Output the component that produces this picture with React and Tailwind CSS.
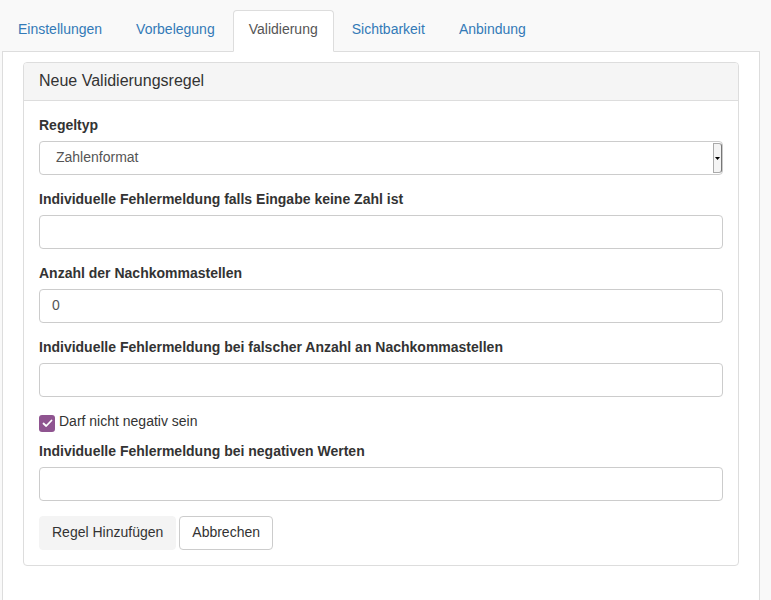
import React from "react";

const tabs = ["Einstellungen", "Vorbelegung", "Validierung", "Sichtbarkeit", "Anbindung"];

function Label({ children }) {
  return <div className="mb-[5px] pb-[2px] font-bold text-[#333] leading-[18px]">{children}</div>;
}

function Input({ value }) {
  return (
    <div className="h-[34px] border border-[#ccc] rounded-[4px] bg-white px-[12px] pb-[2px] flex items-center text-[#555]">
      {value}
    </div>
  );
}

export default function App() {
  return (
    <div className="min-h-[600px] w-[771px] bg-[#f9f9f9] pt-[10px] font-['Liberation_Sans',Arial,sans-serif] text-[14px] leading-[20px] text-[#333]">
      <div className="ml-[2px] w-[758px]">
        <div className="flex border-b border-[#ddd]">
          {tabs.map((t) => {
            const active = t === "Validierung";
            return (
              <div
                key={t}
                className={
                  active
                    ? "mr-[2px] mb-[-1px] px-[15px] pt-[8px] pb-[12px] border border-[#ddd] border-b-transparent rounded-t-[4px] bg-white text-[#555]"
                    : "mr-[2px] mb-[-1px] px-[15px] pt-[8px] pb-[12px] border border-transparent text-[#337ab7]"
                }
              >
                {t}
              </div>
            );
          })}
        </div>
        <div className="bg-white border-x border-[#ddd] px-[20px] pt-[10px] min-h-[560px]">
          <div className="border border-[#ddd] rounded-[4px] bg-white">
            <div className="bg-[#f5f5f5] border-b border-[#ddd] rounded-t-[3px] px-[15px] pt-[9px] pb-[11px] text-[16px] leading-[17px] text-[#333]">
              Neue Validierungsregel
            </div>
            <div className="p-[15px]">
              <div className="mb-[15px]">
                <Label>Regeltyp</Label>
                <div className="h-[34px] border border-[#ccc] rounded-[4px] bg-white flex items-stretch text-[#555]">
                  <div className="flex-1 flex items-center pl-[16px] pb-[2px]">Zahlenformat</div>
                  <div className="w-[9px] my-[1px] border border-[#aaa] border-r-[#777] rounded-r-[3px] bg-[#f4f4f4] flex items-center justify-center">
                    <svg width="5" height="3" viewBox="0 0 5 3">
                      <path d="M0 0 L5 0 L2.5 3 Z" fill="#000" />
                    </svg>
                  </div>
                </div>
              </div>
              <div className="mb-[15px]">
                <Label>Individuelle Fehlermeldung falls Eingabe keine Zahl ist</Label>
                <Input />
              </div>
              <div className="mb-[15px]">
                <Label>Anzahl der Nachkommastellen</Label>
                <Input value="0" />
              </div>
              <div className="mb-[15px]">
                <Label>Individuelle Fehlermeldung bei falscher Anzahl an Nachkommastellen</Label>
                <Input />
              </div>
              <div className="h-[30px] flex items-start">
                <div className="mt-[3px] w-[16px] h-[17px] rounded-[3px] bg-[#8f5490] flex items-center justify-center">
                  <svg width="11" height="9" viewBox="0 0 11 9">
                    <path d="M1.5 4.5 L4.2 7 L9.5 1.5" stroke="#fff" strokeWidth="1.8" fill="none" strokeLinecap="round" strokeLinejoin="round" />
                  </svg>
                </div>
                <span className="ml-[4px] leading-[18px] text-[#333]">Darf nicht negativ sein</span>
              </div>
              <div className="mb-[15px]">
                <Label>Individuelle Fehlermeldung bei negativen Werten</Label>
                <Input />
              </div>
              <div className="flex gap-[3px]">
                <div className="h-[34px] px-[12px] pb-[2px] flex items-center rounded-[4px] border border-[#f4f4f4] bg-[#f4f4f4] text-[#333]">
                  Regel Hinzufügen
                </div>
                <div className="h-[34px] px-[12px] pb-[2px] flex items-center rounded-[4px] border border-[#ccc] bg-white text-[#333]">
                  Abbrechen
                </div>
              </div>
            </div>
          </div>
        </div>
      </div>
    </div>
  );
}
